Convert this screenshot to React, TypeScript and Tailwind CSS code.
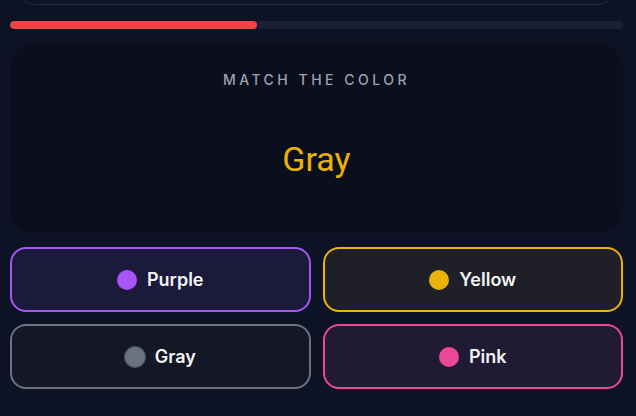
const options = [
  { name: 'Purple', box: 'border-[#a855f7] bg-[#1c1a3a]', dot: 'bg-[#a855f7]' },
  { name: 'Yellow', box: 'border-[#eab308] bg-[#1f2027]', dot: 'bg-[#eab308]' },
  { name: 'Gray', box: 'border-[#6b7280] bg-[#141826]', dot: 'bg-[#6b7280] ring-1 ring-gray-400/40' },
  { name: 'Pink', box: 'border-[#ec4899] bg-[#211a33]', dot: 'bg-[#ec4899]' },
];

export default function App() {
  const progress = 40.3;

  return (
    <div className="h-[416px] w-[636px] overflow-hidden bg-[#0d1225] pl-[10px] pr-[13px] font-['Inter',sans-serif]">
      {/* header card, scrolled mostly out of view */}
      <div className="mx-[6px] -mt-[40px] h-[45px] rounded-[20px] border border-[#262b40] bg-[#0e1327]" />

      {/* progress */}
      <div className="mt-4 h-2 w-full overflow-hidden rounded-full bg-[#1a1f35]">
        <div className="h-full rounded-full bg-[#ef4444]" style={{ width: `${progress}%` }} />
      </div>

      {/* prompt */}
      <div className="mt-[15px] flex h-[189px] flex-col items-center rounded-3xl bg-black/20">
        <p className="mt-[26px] text-sm font-medium uppercase tracking-[0.25em] text-[#9ca3af]">
          Match the color
        </p>
        <p className="mt-[52px] font-['Roboto',sans-serif] text-[34px] leading-none text-[#eab308]">
          Gray
        </p>
      </div>

      {/* answers */}
      <div className="mt-[14px] grid grid-cols-2 gap-3">
        {options.map((o) => (
          <button
            key={o.name}
            className={`flex h-[65px] items-center justify-center gap-2.5 rounded-2xl border-[2.5px] ${o.box}`}
          >
            <span className={`h-5 w-5 rounded-full ${o.dot}`} />
            <span className="text-lg font-semibold text-gray-100">{o.name}</span>
          </button>
        ))}
      </div>
    </div>
  );
}
